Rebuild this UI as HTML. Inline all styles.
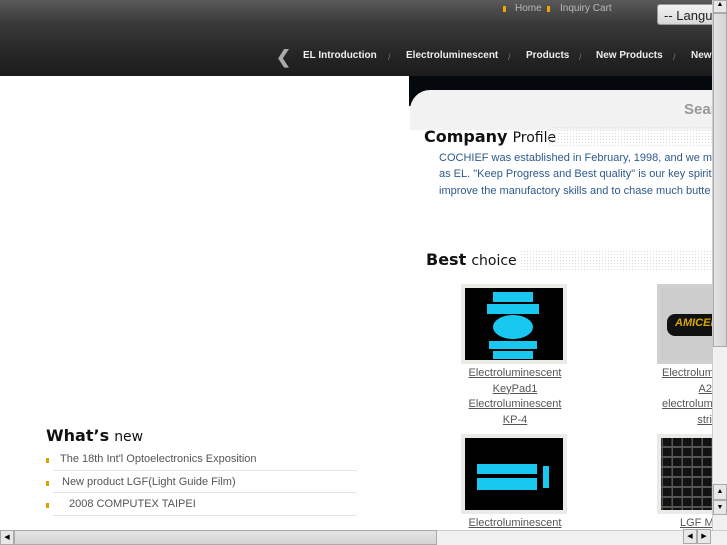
<!DOCTYPE html>
<html><head><meta charset="utf-8"><style>
*{margin:0;padding:0;box-sizing:border-box}
body{width:727px;height:545px;overflow:hidden;position:relative;background:#fff;font-family:"Liberation Sans",sans-serif}
.hdr{position:absolute;left:0;top:0;width:727px;height:76px;background:linear-gradient(#5a5a5a 0%,#3a3a3a 30%,#262626 70%,#1c1c1c 100%)}
.top{position:absolute;top:3px;font-size:10px;color:#b8b8b8}
.bul{position:absolute;width:3px;height:6px;background:#f0a800}
.nav{position:absolute;top:50px;font-size:10px;font-weight:bold;color:#eee}
.sl{position:absolute;top:52px;font-size:9px;color:#777}
.lang{position:absolute;left:657px;top:4px;width:70px;height:21px;background:linear-gradient(#f4f4f4,#d8d8d8);border:1px solid #999;border-radius:3px;font-size:13px;color:#222;padding:3px 0 0 6px}
.dark{position:absolute;left:409px;top:76px;width:318px;height:30px;background:#05080c}
.panel{position:absolute;left:410px;top:90px;width:317px;height:40px;background:#f2f2f2;border-radius:20px 0 0 0}
.h{position:absolute;font-family:"DejaVu Sans",sans-serif;color:#111}
.dots{position:absolute;background-image:radial-gradient(#ddd 0.6px,transparent 0.8px);background-size:3px 3px}
.p{position:absolute;left:439px;font-size:11px;color:#2e5a8c}
.img{position:absolute;width:106px;height:80px;background:#eceae6;padding:4px}
.img>div{width:100%;height:100%;background:#000;position:relative;overflow:hidden}
.lk{position:absolute;font-size:11px;color:#555;text-align:center;line-height:15.5px}
.lk span{text-decoration:underline;display:block}
.news{position:absolute;left:46px;font-size:11px;color:#555}
.line{position:absolute;left:53px;width:304px;height:1px;background:#e4e4e4}
.nb{position:absolute;left:46px;width:3px;height:5px;background:#e0a000}
.k{position:absolute;background:#18c8f0}
</style></head><body>
<div class="hdr"></div>
<div class="bul" style="left:503px;top:6px"></div><div class="top" style="left:515px">Home</div>
<div class="bul" style="left:547px;top:6px"></div><div class="top" style="left:560px">Inquiry Cart</div>
<div class="lang">-- Langu</div>
<div style="position:absolute;left:276px;top:47px;font-size:18px;font-weight:bold;color:#aaa">&#10094;</div>
<div class="nav" style="left:303px">EL Introduction</div><div class="sl" style="left:388px">/</div>
<div class="nav" style="left:406px">Electroluminescent</div><div class="sl" style="left:508px">/</div>
<div class="nav" style="left:526px">Products</div><div class="sl" style="left:579px">/</div>
<div class="nav" style="left:596px">New Products</div><div class="sl" style="left:673px">/</div>
<div class="nav" style="left:691px">News</div>
<div class="dark"></div><div class="panel"></div>
<div style="position:absolute;left:684px;top:101px;font-size:15px;font-weight:bold;color:#999">Sear</div>
<div class="h" style="left:424px;top:127px;font-size:16px"><b>Company</b> <span style="font-size:14px">Profile</span></div>
<div class="dots" style="left:548px;top:126px;width:165px;height:20px"></div>
<div class="p" style="top:152px">COCHIEF was established in February, 1998, and we m</div>
<div class="p" style="top:168px">as EL. "Keep Progress and Best quality" is our key spirit</div>
<div class="p" style="top:185px">improve the manufactory skills and to chase much butte</div>
<div class="h" style="left:426px;top:250px;font-size:16px"><b>Best</b> <span style="font-size:14px">choice</span></div>
<div class="dots" style="left:520px;top:250px;width:193px;height:22px"></div>
<div class="img" style="left:461px;top:284px"><div>
<div class="k" style="left:28px;top:4px;width:40px;height:10px"></div>
<div class="k" style="left:22px;top:16px;width:52px;height:10px"></div>
<div class="k" style="left:28px;top:27px;width:40px;height:24px;border-radius:50%"></div>
<div class="k" style="left:24px;top:53px;width:48px;height:8px"></div>
<div class="k" style="left:28px;top:63px;width:40px;height:8px"></div>
</div></div>
<div class="img" style="left:657px;top:284px;background:#d0d0d0"><div style="background:#ccc"><div style="position:absolute;left:6px;top:26px;width:60px;height:22px;background:#111;border-radius:8px"></div><div style="position:absolute;left:14px;top:29px;font:italic bold 11px 'Liberation Sans';color:#d8a800">AMICEL</div></div></div>
<div class="lk" style="left:462px;top:366px;width:106px"><span>Electroluminescent</span><span>KeyPad1</span><span>Electroluminescent</span><span>KP-4</span></div>
<div class="lk" style="left:662px;top:366px;width:50px;text-align:right;overflow:hidden;white-space:nowrap"><span style="text-align:left">Electrolum</span><span>A2</span><span style="text-align:left">electrolum</span><span>stri</span></div>
<div class="img" style="left:461px;top:434px"><div>
<div class="k" style="left:12px;top:26px;width:60px;height:10px"></div>
<div class="k" style="left:12px;top:40px;width:60px;height:12px"></div>
<div class="k" style="left:78px;top:28px;width:6px;height:22px"></div>
</div></div>
<div class="img" style="left:657px;top:434px"><div style="background:#111;background-image:linear-gradient(90deg,transparent 85%,#555 85%),linear-gradient(transparent 80%,#555 80%);background-size:10px 10px;background-position:2px 10px"></div></div>
<div class="lk" style="left:462px;top:516px;width:106px"><span>Electroluminescent</span></div>
<div class="lk" style="left:680px;top:516px"><span>LGF M</span></div>
<div class="h" style="left:46px;top:426px;font-size:16px"><b>What’s</b> <span style="font-size:14px">new</span></div>
<div class="nb" style="top:458px"></div><div class="news" style="left:60px;top:453px">The 18th Int'l Optoelectronics Exposition</div>
<div class="line" style="top:470px"></div>
<div class="nb" style="top:481px"></div><div class="news" style="left:62px;top:476px">New product LGF(Light Guide Film)</div>
<div class="line" style="top:492px"></div>
<div class="nb" style="top:503px"></div><div class="news" style="left:69px;top:498px">2008 COMPUTEX TAIPEI</div>
<div class="line" style="top:515px"></div>
<div style="position:absolute;left:712px;top:0;width:15px;height:530px;background:#f0f0f0;border-left:1px solid #ccc"></div>
<div style="position:absolute;left:713px;top:0;width:14px;height:13px;background:#e8e8e8;border:1px solid #aaa;font-size:7px;text-align:center">&#9650;</div>
<div style="position:absolute;left:713px;top:13px;width:14px;height:334px;background:linear-gradient(90deg,#e4e4e4,#d4d4d4);border:1px solid #aaa"></div>
<div style="position:absolute;left:713px;top:484px;width:14px;height:16px;background:#e8e8e8;border:1px solid #aaa;font-size:7px;text-align:center;line-height:14px">&#9650;</div>
<div style="position:absolute;left:713px;top:500px;width:14px;height:15px;background:#e8e8e8;border:1px solid #aaa;font-size:7px;text-align:center;line-height:13px">&#9660;</div>
<div style="position:absolute;left:0;top:530px;width:727px;height:15px;background:#f0f0f0;border-top:1px solid #ccc"></div>
<div style="position:absolute;left:0;top:530px;width:14px;height:15px;background:#e8e8e8;border:1px solid #aaa;font-size:7px;text-align:center;line-height:13px">&#9664;</div>
<div style="position:absolute;left:14px;top:530px;width:423px;height:15px;background:linear-gradient(#e4e4e4,#d4d4d4);border:1px solid #aaa"></div>
<div style="position:absolute;left:683px;top:529px;width:14px;height:15px;background:#e8e8e8;border:1px solid #aaa;font-size:7px;text-align:center;line-height:13px">&#9664;</div>
<div style="position:absolute;left:697px;top:529px;width:14px;height:15px;background:#e8e8e8;border:1px solid #aaa;font-size:7px;text-align:center;line-height:13px">&#9654;</div>
</body></html>
